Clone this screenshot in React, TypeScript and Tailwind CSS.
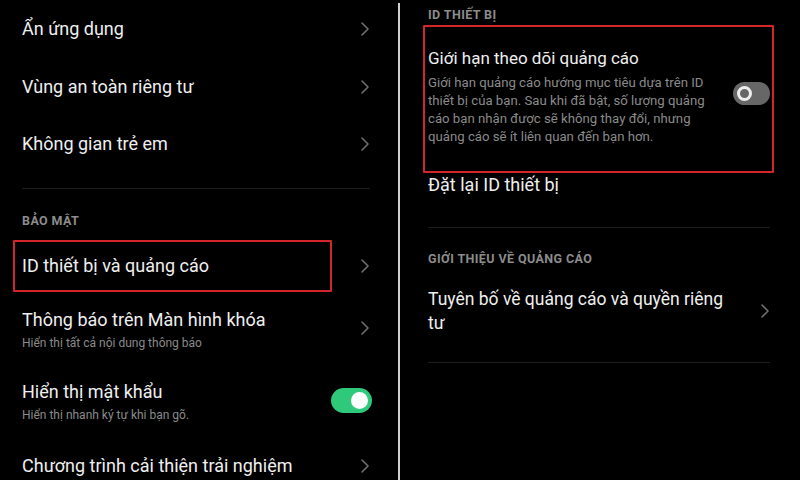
import React from 'react';

const Chevron = () => (
  <svg width="10" height="16" viewBox="0 0 10 16" fill="none" className="shrink-0">
    <polyline points="2,2 8,8 2,14" stroke="#6f6f6f" strokeWidth="1.6" strokeLinecap="round" strokeLinejoin="round" />
  </svg>
);

const ToggleOn = () => (
  <div className="w-[41px] h-[25px] rounded-full bg-[#2fc97c] flex items-center justify-end pr-[4px] shrink-0">
    <div className="w-[17px] h-[17px] rounded-full bg-white" />
  </div>
);

const ToggleOff = () => (
  <div className="w-[37px] h-[23px] rounded-full bg-[#676767] flex items-center pl-[4px] shrink-0">
    <div className="w-[15px] h-[15px] rounded-full border-[3px] border-[#eeeeee]" />
  </div>
);

const Title = ({ children }: { children: React.ReactNode }) => (
  <div className="text-[18px] leading-[22px] text-[#efefef]">{children}</div>
);

const Sub = ({ children }: { children: React.ReactNode }) => (
  <div className="text-[12px] leading-[16px] text-[#8a8a8a] mt-[4px]">{children}</div>
);

const Header = ({ children }: { children: React.ReactNode }) => (
  <div className="text-[12.5px] leading-[16px] font-bold text-[#8c8c8c] tracking-[0.4px]">{children}</div>
);

const LeftPanel = () => (
  <div className="w-[398px] h-full flex flex-col pl-[22px] pr-[28px]">
    {['Ẩn ứng dụng', 'Vùng an toàn riêng tư', 'Không gian trẻ em'].map((t, i) => (
      <div key={t} className={`flex items-center justify-between ${i === 1 ? 'h-[57px]' : 'h-[58px]'}`}>
        <Title>{t}</Title>
        <Chevron />
      </div>
    ))}
    <div className="h-px bg-[#1c1c1c] mt-[15px]" />
    <div className="h-[51px] pt-[24px]">
      <Header>BẢO MẬT</Header>
    </div>
    <div className="relative h-[52px] flex items-center justify-between">
      <div className="absolute left-[-9px] top-0 w-[319px] h-[52px] border-2 border-[#d3262c] rounded-[1px]" />
      <Title>ID thiết bị và quảng cáo</Title>
      <Chevron />
    </div>
    <div className="h-[74px] flex items-start justify-between">
      <div className="pt-[17px]">
        <Title>Thông báo trên Màn hình khóa</Title>
        <Sub>Hiển thị tất cả nội dung thông báo</Sub>
      </div>
      <div className="pt-[28px]"><Chevron /></div>
    </div>
    <div className="h-[74px] flex items-start justify-between">
      <div className="pt-[15px]">
        <Title>Hiển thị mật khẩu</Title>
        <Sub>Hiển thị nhanh ký tự khi bạn gõ.</Sub>
      </div>
      <div className="pt-[22px] mr-[-2px]"><ToggleOn /></div>
    </div>
    <div className="h-[40px] flex items-start justify-between">
      <div className="pt-[15px]">
        <Title>Chương trình cải thiện trải nghiệm</Title>
      </div>
      <div className="pt-[18px]"><Chevron /></div>
    </div>
  </div>
);

const RightPanel = () => (
  <div className="flex-1 h-full flex flex-col pl-[28px] pr-[30px]">
    <div className="h-[25px] pt-[7px]">
      <Header>ID THIẾT BỊ</Header>
    </div>
    <div className="relative h-[148px] flex items-start justify-between pt-[22px]">
      <div className="absolute left-[-5px] right-[-4px] top-0 h-[148px] border-2 border-[#d3262c] rounded-[1px]" />
      <div className="w-[300px]">
        <div className="text-[17px] leading-[22px] text-[#efefef]">Giới hạn theo dõi quảng cáo</div>
        <div className="text-[13.2px] leading-[18px] text-[#8a8a8a] mt-[5px] whitespace-nowrap">
          Giới hạn quảng cáo hướng mục tiêu dựa trên ID
          <br />
          thiết bị của bạn. Sau khi đã bật, số lượng quảng
          <br />
          cáo bạn nhận được sẽ không thay đổi, nhưng
          <br />
          quảng cáo sẽ ít liên quan đến bạn hơn.
        </div>
      </div>
      <div className="pt-[35px]"><ToggleOff /></div>
    </div>
    <div className="h-[54px] pt-[1px]">
      <div className="text-[18px] leading-[22px] text-[#efefef]">Đặt lại ID thiết bị</div>
    </div>
    <div className="h-px bg-[#1c1c1c]" />
    <div className="h-[52px] pt-[23px]">
      <Header>GIỚI THIỆU VỀ QUẢNG CÁO</Header>
    </div>
    <div className="h-[82px] flex items-center justify-between pb-[20px]">
      <div className="w-[300px] text-[17.5px] leading-[24px] text-[#efefef]">
        Tuyên bố về quảng cáo và quyền riêng tư
      </div>
      <Chevron />
    </div>
    <div className="h-px bg-[#1c1c1c]" />
  </div>
);

export default function App() {
  return (
    <div className="w-[800px] h-[480px] bg-black flex overflow-hidden" style={{ fontFamily: 'Roboto, "Noto Sans", sans-serif' }}>
      <LeftPanel />
      <div className="w-[2px] h-[477px] mt-[3px] bg-[#cfcfcf]" />
      <RightPanel />
    </div>
  );
}
